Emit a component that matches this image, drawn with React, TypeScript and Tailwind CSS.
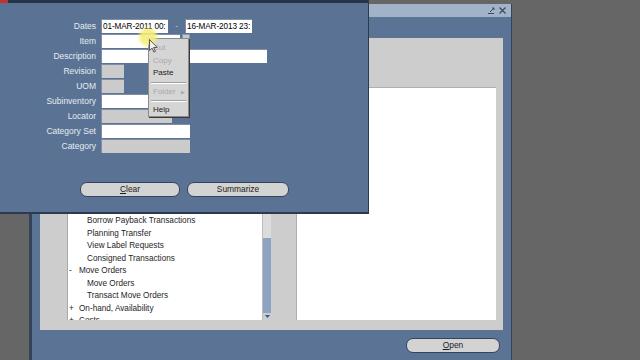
import React from 'react';

const font = { fontFamily: '"Liberation Sans", Arial, sans-serif' };

function Field({ w, gray, text }: { w: string; gray?: boolean; text?: string }) {
  return (
    <div
      className={`${w} h-[14px] border-t border-l border-[#7f8ea3] ${gray ? 'bg-[#cbcbcb]' : 'bg-white'} text-[8.2px] leading-[13px] text-black pl-[1px] overflow-hidden whitespace-nowrap tracking-[-0.1px]`}
    >
      {text}
    </div>
  );
}

function Label({ children }: { children: React.ReactNode }) {
  return <div className="text-right text-[8.5px] leading-[14px] text-[#e6ebf1] whitespace-nowrap">{children}</div>;
}

const tree = [
  { t: 'Borrow Payback Transactions', lvl: 2 },
  { t: 'Planning Transfer', lvl: 2 },
  { t: 'View Label Requests', lvl: 2 },
  { t: 'Consigned Transactions', lvl: 2 },
  { t: 'Move Orders', lvl: 1, sign: '-' },
  { t: 'Move Orders', lvl: 2 },
  { t: 'Transact Move Orders', lvl: 2 },
  { t: 'On-hand, Availability', lvl: 1, sign: '+' },
  { t: 'Costs', lvl: 1, sign: '+' },
];

function OvalButton({ w, children }: { w: string; children: React.ReactNode }) {
  return (
    <div
      className={`${w} h-[15px] rounded-[7px] border border-[#34445c] bg-[#d3d3d3] flex items-center justify-center text-[8.4px] text-[#1a1a1a]`}
    >
      {children}
    </div>
  );
}

export default function App() {
  return (
    <div className="relative w-[640px] h-[360px] overflow-hidden bg-[#666666]" style={font}>
      {/* Navigator window (behind) */}
      <div className="absolute left-[29px] top-[4px] w-[483px] h-[360px] flex flex-col border-l-[3px] border-r border-[#34435a] bg-[#5b7496]">
        <div className="h-[13px] bg-[#a2b3c9] flex items-center justify-end gap-[2px] pr-[4px]">
          <svg width="9" height="9" viewBox="0 0 9 9">
            <path d="M1 7.5h6M3 6l4-4M5 2h2v2" stroke="#3c4a5e" strokeWidth="1" fill="none" />
          </svg>
          <svg width="9" height="9" viewBox="0 0 9 9">
            <path d="M1.5 1.5l6 6M7.5 1.5l-6 6" stroke="#3c4a5e" strokeWidth="1.2" />
          </svg>
        </div>
        <div className="mt-[21px] ml-[8px] mr-[8px] h-[292px] bg-[#cdcdcd] flex gap-[25px] pl-[27px] pr-[7px] pt-[49px] pb-[10px]">
          <div className="w-[204px] flex bg-white border-t border-l border-[#a9a9a9]">
            <div className="flex-1 pt-[127px] text-[8.2px] text-[#1e1e1e] overflow-hidden">
              {tree.map((r, i) => (
                <div key={i} className={`h-[12.5px] leading-[12.5px] whitespace-nowrap flex ${r.lvl === 2 ? 'pl-[19px]' : 'pl-[1px]'}`}>
                  {r.sign && <span className="w-[10px]">{r.sign}</span>}
                  <span>{r.t}</span>
                </div>
              ))}
            </div>
            <div className="w-[9px] flex flex-col bg-[#d2d2d2] border-l border-[#bdbdbd]">
              <div className="h-[150px] bg-[#dcdcdc]" />
              <div className="flex-1 bg-[#8ea3c1]" />
              <div className="h-[7px] bg-[#c9ced6] flex items-center justify-center">
                <svg width="5" height="3" viewBox="0 0 5 3">
                  <path d="M0 0h5L2.5 3z" fill="#4a5566" />
                </svg>
              </div>
            </div>
          </div>
          <div className="flex-1 bg-white border-t border-l border-[#b0b0b0]" />
        </div>
        <div className="mt-[8px] flex justify-end pr-[11px]">
          <OvalButton w="w-[94px]">
            <span className="underline">O</span>pen
          </OvalButton>
        </div>
      </div>

      {/* Find dialog (front) */}
      <div className="absolute left-0 top-0 w-[369px] h-[214px] flex flex-col bg-[#5a7395] border-r border-b-2 border-[#2c3a50]">
        <div className="h-[3px] bg-[#26344a] flex">
          <div className="w-[8px] bg-[#c4322c]" />
        </div>
        <div className="pt-[16px] grid grid-cols-[96px_1fr] gap-x-[5px] gap-y-[1px]">
          <Label>Dates</Label>
          <div className="flex items-center">
            <Field w="w-[67px]" text="01-MAR-2011 00:" />
            <div className="w-[17px] text-center text-[8px] leading-[14px] text-[#c8d2de]">-</div>
            <Field w="w-[67px]" text="16-MAR-2013 23:" />
          </div>
          <Label>Item</Label>
          <div className="flex gap-[2px]">
            <Field w="w-[79px]" />
            <div className="w-[8px] h-[14px] bg-[#c6c9ce] border border-[#8b98aa]" />
          </div>
          <Label>Description</Label>
          <Field w="w-[166px]" />
          <Label>Revision</Label>
          <Field w="w-[23px]" gray />
          <Label>UOM</Label>
          <Field w="w-[23px]" gray />
          <Label>Subinventory</Label>
          <Field w="w-[79px]" />
          <Label>Locator</Label>
          <Field w="w-[71px]" gray />
          <Label>Category Set</Label>
          <Field w="w-[89px]" />
          <Label>Category</Label>
          <Field w="w-[89px]" gray />
        </div>
        <div className="mt-[29px] pl-[80px] flex gap-[7px]">
          <OvalButton w="w-[100px]">
            <span className="underline">C</span>lear
          </OvalButton>
          <OvalButton w="w-[102px]">Summarize</OvalButton>
        </div>
      </div>

      {/* Context menu */}
      <div className="absolute left-[148px] top-[38px] w-[41px] h-[79px] bg-[#d5d5d5] border border-[#8a8a8a] shadow-[1px_1px_0_#3a3a3a] pt-[3px] text-[8px]">
        <div className="h-[12.5px] leading-[12.5px] pl-[4px] text-[#a9a9a9]">Cut</div>
        <div className="h-[12.5px] leading-[12.5px] pl-[4px] text-[#a9a9a9]">Copy</div>
        <div className="h-[12.5px] leading-[12.5px] pl-[4px] text-[#1b1b1b]">Paste</div>
        <div className="h-[6px] flex items-center px-[2px]">
          <div className="w-full border-t border-[#a0a0a0] border-b-white border-b" />
        </div>
        <div className="h-[12.5px] leading-[12.5px] pl-[4px] pr-[3px] text-[#a9a9a9] flex justify-between">
          <span>Folder</span>
          <span className="text-[5px]">▶</span>
        </div>
        <div className="h-[6px] flex items-center px-[2px]">
          <div className="w-full border-t border-[#a0a0a0] border-b-white border-b" />
        </div>
        <div className="h-[12.5px] leading-[12.5px] pl-[4px] text-[#1b1b1b]">Help</div>
      </div>

      {/* Mouse highlight and pointer */}
      <div className="absolute left-[139px] top-[28px] w-[18px] h-[18px] rounded-full bg-[#f6ee78] opacity-90 blur-[1.5px]" />
      <svg className="absolute left-[149px] top-[39px]" width="9" height="14" viewBox="0 0 9 14">
        <path d="M0.5 0.5v11l2.6-2.4 1.8 4 1.5-.7-1.8-3.9h3.6z" fill="#f2f2f2" stroke="#4a4a4a" strokeWidth="0.9" />
      </svg>
    </div>
  );
}
